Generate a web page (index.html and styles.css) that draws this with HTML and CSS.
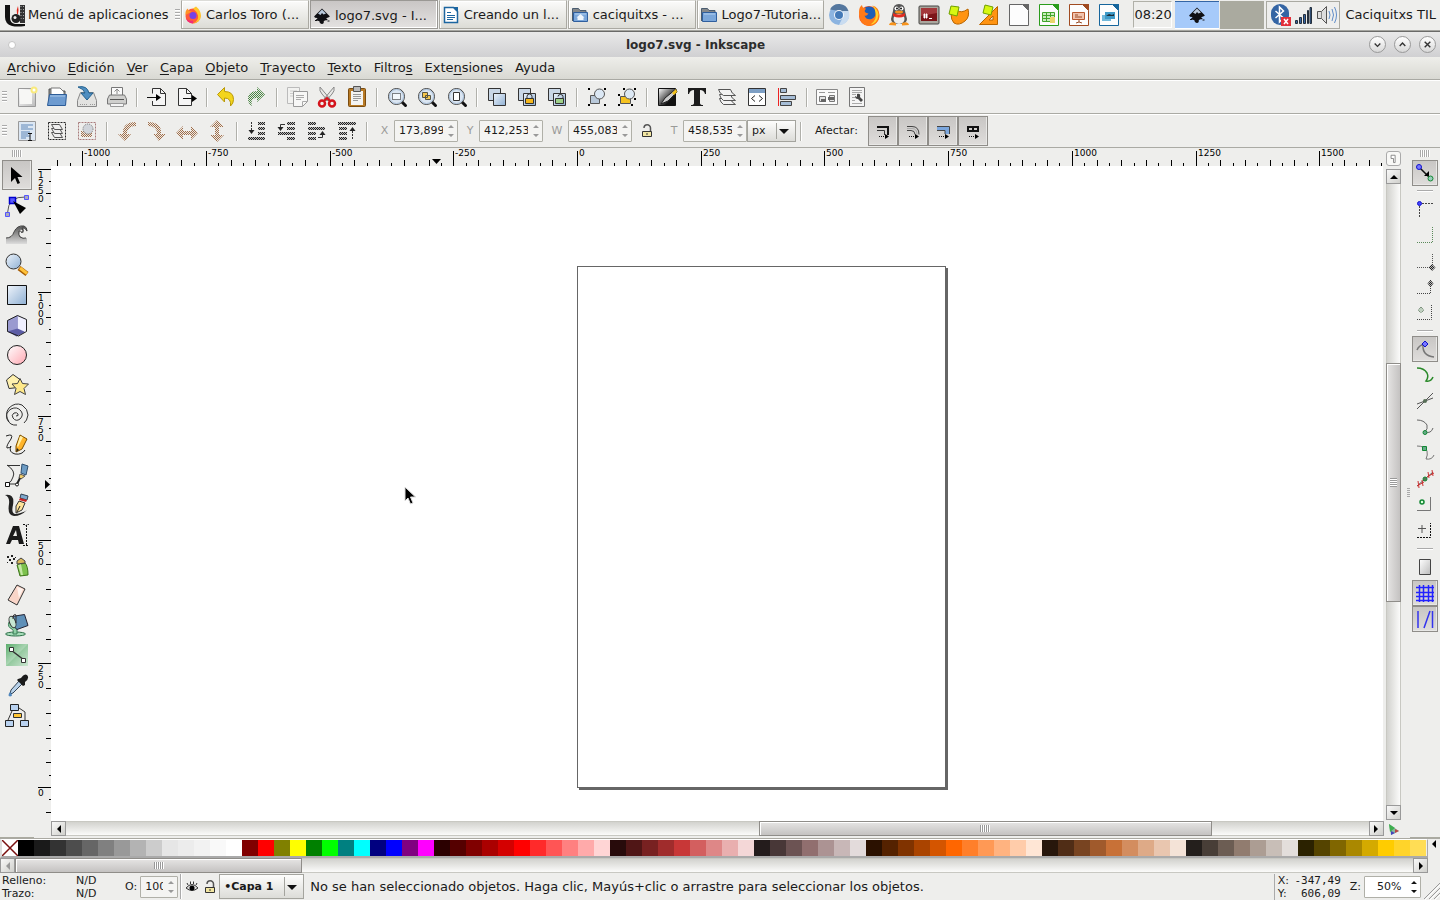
FILE: index.html
```html
<!DOCTYPE html>
<html lang="es">
<head>
<meta charset="utf-8">
<title>logo7.svg - Inkscape</title>
<link rel="stylesheet" href="styles.css">
</head>
<body>
<svg class="defs" aria-hidden="true">
  <defs>
    <linearGradient id="gBlue" x1="0" y1="0" x2="1" y2="1"><stop offset="0" stop-color="#eef4fb"/><stop offset="1" stop-color="#8fb0d3"/></linearGradient>
    <linearGradient id="gGrey" x1="0" y1="0" x2="1" y2="1"><stop offset="0" stop-color="#fff"/><stop offset="1" stop-color="#bbb"/></linearGradient>
    <linearGradient id="gPink" x1="0" y1="0" x2="1" y2="1"><stop offset="0" stop-color="#fff"/><stop offset="1" stop-color="#ffa8b2"/></linearGradient>
    <linearGradient id="gGreen" x1="0" y1="0" x2="1" y2="1"><stop offset="0" stop-color="#5aad6b"/><stop offset="1" stop-color="#fff"/></linearGradient>
    <linearGradient id="gInk" x1="0" y1="0" x2="1" y2="1"><stop offset="0" stop-color="#fff"/><stop offset=".7" stop-color="#111"/></linearGradient>
    <linearGradient id="gWave" x1="0" y1="0" x2="0" y2="1"><stop offset="0" stop-color="#555"/><stop offset="1" stop-color="#ddd"/></linearGradient>
    <pattern id="sBrown" width="2" height="2" patternUnits="userSpaceOnUse"><path fill="#eeeae6" d="M0 0h2v2H0z"/><path fill="#a0704c" d="M0 0h1v1H0zM1 1h1v1H1z"/></pattern>
    <pattern id="sDark" width="2" height="2" patternUnits="userSpaceOnUse"><path fill="#bbb" d="M0 0h2v2H0z"/><path fill="#222" d="M0 0h1v1H0zM1 1h1v1H1z"/></pattern>
    <pattern id="sGreen" width="2" height="2" patternUnits="userSpaceOnUse"><path fill="#e2eae0" d="M0 0h2v2H0z"/><path fill="#4c8245" d="M0 0h1v1H0zM1 1h1v1H1z"/></pattern>
  </defs>
  <symbol id="folder" viewBox="0 0 24 24"><path d="M4 20V4h7l1 2h8v14z" fill="#8d8f8c" stroke="#555" /><path d="M6 8V3h9l4 4v4H6z" fill="#fff" stroke="#777"/><path d="M2.500 20.500l2-11h17l-1 11z" fill="#6d9bd0" stroke="#2c5c98"/><path d="M5 11h15" stroke="#a9c7e8"/></symbol>
  <symbol id="dir" viewBox="0 0 18 18"><path d="M1.500 15V2.500h6l1.500 2h6V15" fill="#85888a" stroke="#4a5c70"/><path d="M2.500 15.500v-9h14v9z" fill="#7ba7da" stroke="#2f5f9e"/><path d="M4 8h11" stroke="#b4d0ee"/></symbol>
  <symbol id="lens" viewBox="0 0 24 24"><path d="M17 17l3.500 3.500" stroke="#111" stroke-width="3" stroke-linecap="round"/><circle cx="11.500" cy="11.500" r="8" fill="#dbe6f2" stroke="#444"/><circle cx="11.500" cy="11.500" r="7" fill="none" stroke="#a8bfd8"/></symbol>
  <symbol id="lock" viewBox="0 0 12 14"><path d="M3 4a3 3 0 0 1 6.500 0v4" fill="none" stroke="#555" stroke-width="1.500"/><path d="M1.500 7.500h9v5h-9z" fill="#f2e6a2" stroke="#333"/><path d="M6 9v2" stroke="#333"/></symbol>
  <symbol id="ink" viewBox="0 0 18 18"><path d="M9 1.500L1.500 9c-1 1 1 2 3 2.200 0 1-2 .8-1.500 1.800s3 .5 3.500 1.500-.5 1.500 2.500 2.500c3-1 1-2 2-3s4-.5 3.500-1.500-2-.8-1-1.300 4-1.200 3-2.200z" fill="#101014"/><path d="M9 2.500l4 4-2.500 1L9 6 7.500 8 5 6.500z" fill="#b9c9dc"/><path d="M2 13.500h2M14.500 14h2" stroke="#101014"/></symbol>
  <symbol id="doc" viewBox="0 0 24 24"><path d="M2.500 1.500h13l6 6v15h-19z" fill="#fdfdfd" stroke="currentColor"/><path d="M15 1h7v7z" fill="currentColor"/></symbol>
  <symbol id="squares" viewBox="0 0 24 24"><path d="M3.500 3.500h12v12h-12z" fill="#c9d7e6" stroke="#333"/><path d="M8.500 8.500h12v12h-12z" fill="url(#gBlue)" stroke="#333"/></symbol>
</svg>

<header class="panel">
  <button class="appmenu"><svg width="22" height="24" viewBox="0 0 22 24"><path d="M1 2h5v13q0 5 5 6h10v2q-8 1-13 0-7-2-7-9z" fill="#111"/><path d="M16 2h5v18h-5z" fill="#333"/><path d="M17 3v15M19.500 3v15" stroke="#aaa" stroke-dasharray="1 2"/><circle cx="12" cy="15.500" r="4.500" fill="#222"/><circle cx="11" cy="14.500" r="1.500" fill="#eee"/><path d="M13 11q-1-4 1-8 1 4 0 8z" fill="#e02418"/></svg>Menú de aplicaciones</button>
  <i class="grip"></i>
  <nav class="tasks">
    <button class="task"><svg width="18" height="18" viewBox="0 0 18 18"><circle cx="9" cy="10" r="7.500" fill="#ff5a3c"/><path d="M9 2.500L12 .5q5 4 5 9.500a8 8 0 0 1-8 7.500q6-3 5-8-1-4-5-7z" fill="#ffc629"/><path d="M1.500 9Q1 4 4 2.500q0 3 4 3z" fill="#ff9426"/><path d="M9 17.500a8 8 0 0 1-7-5q3 3 7 2z" fill="#f02a7c"/><circle cx="9" cy="9.500" r="3.500" fill="#7542e5"/></svg><span>Carlos Toro (...</span></button>
    <button class="task active"><svg width="18" height="18"><use href="#ink"/></svg><span>logo7.svg - I...</span></button>
    <button class="task"><svg width="18" height="18" viewBox="0 0 18 18"><path d="M2.500 1.500h9l4 4v11h-13z" fill="#fff" stroke="#1c66a0" stroke-width="1.500"/><path d="M11 1h5v5z" fill="#1c66a0"/><path d="M5 6.500h4M5 9.500h8M5 11.500h8M5 13.500h6" stroke="#1c66a0"/></svg><span>Creando un l...</span></button>
    <button class="task"><svg width="18" height="18" viewBox="0 0 18 18"><use href="#dir"/><path d="M9.500 8l4 3.500h-1V14h-6v-2.500h-1z" fill="#eef5fc"/></svg><span>caciquitxs - ...</span></button>
    <button class="task"><svg width="18" height="18"><use href="#dir"/></svg><span>Logo7-Tutoria...</span></button>
  </nav>
  <div class="launchers">
    <button aria-label="Chromium"><svg viewBox="0 0 24 24"><circle cx="12" cy="12" r="10" fill="#8cb4e0"/><path d="M3 6.500A10 10 0 0 1 21.500 8H12z" fill="#54779e"/><path d="M21.500 8a10 10 0 0 1-9.500 14L16 14V8z" fill="#c9dcf0"/><circle cx="12" cy="12" r="5" fill="#f2f6fa"/><circle cx="12" cy="12" r="4" fill="#447ab8"/></svg></button>
    <button aria-label="Firefox"><svg viewBox="0 0 24 24"><circle cx="12" cy="13" r="10" fill="#f4511e"/><circle cx="12" cy="11" r="7.500" fill="#1d5fb8"/><path d="M2 9q0-5 3-7 0 3 4 3.500-2 2-.5 4 2 1 3 1-2 3-4 2 2 5 7 3.500 5-2 4-8-.5-3-3-5.500Q22 4 22.500 12A10.500 10.500 0 0 1 12 23Q2 22 2 9z" fill="#ff7a18"/><path d="M15.500 2.500q5 3 6 9-1 9-8 10 7-5 5-12-.5-4-3-7z" fill="#ffd22e"/></svg></button>
    <button aria-label="Pingüino"><svg viewBox="0 0 24 24"><path d="M12 1q6 0 6 7l2 8q0 5-8 5t-8-5l2-8q0-7 6-7z" fill="#555"/><ellipse cx="12" cy="16" rx="5.500" ry="5" fill="#eee"/><path d="M6 10q6 3 12 0v3q-6 3-12 0z" fill="#e12b20"/><circle cx="9.500" cy="5.500" r="2" fill="#fff"/><circle cx="14.500" cy="5.500" r="2" fill="#fff"/><circle cx="10" cy="5.500" r="1" fill="#111"/><circle cx="14" cy="5.500" r="1" fill="#111"/><ellipse cx="12" cy="9" rx="4" ry="1.500" fill="#f6931d"/><path d="M2 22q1-4 7-2v2.500zM22 22q-1-4-7-2v2.500z" fill="#f6931d"/></svg></button>
    <button aria-label="Terminal de root"><svg viewBox="0 0 24 24"><rect x="2" y="3" width="20" height="18" rx="1" fill="#aaa69d" stroke="#444"/><path d="M4 5h16v13H4z" fill="#7c1519"/><path d="M4 5h16v5L4 13z" fill="#a3383b"/><path d="M6 12h5M6 14h5M7.500 10.500v5M9.500 10.500v5M12 15.500h3" stroke="#fff"/></svg></button>
    <button aria-label="Notas"><svg viewBox="0 0 24 24"><path d="M4 11l6-4q4 4 11-1 2 8-3 12-6 5-11 2-3-3-3-9z" fill="#ff9412" stroke="#b86500"/><path d="M4 3l8 1-2 9-8-2z" fill="#d7f711" stroke="#70a000"/></svg></button>
    <button aria-label="Dibujo"><svg viewBox="0 0 24 24"><path d="M20.500 3.500v18h-18z" fill="#ff9412" stroke="#b86500"/><path d="M16 13v4h-4z" fill="#eee" stroke="#b86500"/><path d="M8 2l8 2-2 8-8-2z" fill="#d7f711" stroke="#70a000"/></svg></button>
    <button aria-label="LibreOffice" class="c-grey"><svg><use href="#doc"/></svg></button>
    <button aria-label="Calc" class="c-green"><svg viewBox="0 0 24 24"><use href="#doc"/><path d="M5.500 9.500h12v9h-12z" fill="#c8ecbc" stroke="#43a52c"/><path d="M6 12.500h12M6 15.500h12M9.500 10v9M13.500 10v9" stroke="#43a52c"/><path d="M13 14h5v6h-5z" fill="#e9d66b"/></svg></button>
    <button aria-label="Impress" class="c-orange"><svg viewBox="0 0 24 24"><use href="#doc"/><path d="M5.500 9.500h12v7h-12z" fill="#f1c3ad" stroke="#b8582e"/><path d="M8 12h3M8 14h7M12 17v2l-3 1M12 19l3 1" stroke="#9a4a24" fill="none"/></svg></button>
    <button aria-label="Draw" class="c-blue"><svg viewBox="0 0 24 24"><use href="#doc"/><path d="M5 12h9v6H5z" fill="#71b8da"/><path d="M8 9h10v7H8z" fill="#3e9ac8"/><path d="M9 13l3-2 3 1 2-1v2z" fill="#1d2c36"/></svg></button>
  </div>
  <time class="clock">08:20</time>
  <div class="pager"><button class="current" aria-label="Escritorio 1"><svg width="18" height="18"><use href="#ink"/></svg></button><button aria-label="Escritorio 2"></button></div>
  <div class="tray">
    <svg width="22" height="24" viewBox="0 0 22 24"><rect x="1" y="1" width="18" height="21" rx="9" fill="#3465a4"/><path d="M5.500 8l8 7-4 4V4l4 4-8 7" fill="none" stroke="#fff" stroke-width="1.500"/><path d="M11 14h10v9H11z" fill="#e2303a"/><path d="M14 16l4 5M18 16l-4 5" stroke="#fff" stroke-width="1.500"/></svg>
    <svg width="20" height="20" viewBox="0 0 20 20"><path d="M1.500 15.500h2v3h-2zM5.500 12.500h2v6h-2zM9.500 9.500h2v9h-2zM13.500 5.500h1v13h-1zM16 2.500h1.500v16H16z" fill="#3465a4" stroke="#26303c"/></svg>
    <svg width="22" height="20" viewBox="0 0 22 20"><path d="M1.500 6.500h4l5-5v17l-5-5h-4z" fill="#ddd" stroke="#555"/><path d="M5.500 7v6" stroke="#888"/><path d="M13 6q2 4 0 8M16 4q3 6 0 12M18.500 2q4 8 0 16" fill="none" stroke="#5f8cc8"/></svg>
  </div>
  <span class="user">Caciquitxs TIL</span>
</header>

<div class="titlebar"><i class="dot"></i><h1>logo7.svg - Inkscape</h1>
  <div class="winbtns">
    <button aria-label="Minimizar"><svg viewBox="0 0 16 16"><path d="M5 7l3 3 3-3"/></svg></button><button aria-label="Maximizar"><svg viewBox="0 0 16 16"><path d="M5 9.500l3-3 3 3"/></svg></button><button aria-label="Cerrar"><svg viewBox="0 0 16 16"><path d="M5 5l6 6M11 5l-6 6"/></svg></button>
  </div>
</div>

<nav class="menubar"><button><u>A</u>rchivo</button><button><u>E</u>dición</button><button><u>V</u>er</button><button><u>C</u>apa</button><button><u>O</u>bjeto</button><button><u>T</u>rayecto</button><button><u>T</u>exto</button><button>Filtro<u>s</u></button><button>Exte<u>n</u>siones</button><button>Ayuda</button></nav>

<div class="toolbar" role="toolbar" aria-label="Comandos">
  <i class="grip"></i>
  <button aria-label="Nuevo"><svg viewBox="0 0 24 24"><path d="M3.500 3.500h17v18h-17z" fill="url(#gGrey)" stroke="#999"/><path d="M5 5h12v14H5z" fill="#f7f7f5"/><circle cx="19" cy="5" r="3.500" fill="#f9ea7c"/><circle cx="19" cy="5" r="1.500" fill="#fff"/></svg></button>
  <button aria-label="Abrir"><svg><use href="#folder"/></svg></button>
  <button aria-label="Guardar"><svg viewBox="0 0 24 24"><path d="M2.500 15.500l3-8h13l3 8v6h-19z" fill="#e2e2e0" stroke="#888"/><path d="M5 19.500h8M15 19.500h5" stroke="#999" stroke-dasharray="1 1"/><path d="M3 2q9-2 11 6h4l-6 7-6-7h4q-1-4-7-6z" fill="#4f8ec0" stroke="#23618f"/></svg></button>
  <button aria-label="Imprimir"><svg viewBox="0 0 24 24"><path d="M6.500 11V2.500h11V11" fill="#fafafa" stroke="#777"/><path d="M12 9V5M9.500 6.500L12 4l2.500 2.500" stroke="#888" fill="none"/><path d="M2.500 14l2-4h15l2 4v5h-19z" fill="#cfcfcd" stroke="#777"/><path d="M5 14.500h14" stroke="#555"/><path d="M5.500 18.500h13v3h-13z" fill="#f5f5f5" stroke="#999"/></svg></button>
  <i class="sep"></i>
  <button aria-label="Importar"><svg viewBox="0 0 24 24"><path d="M7.500 8.500v-5h8l5 5v12h-13V16" fill="#f5f5f5" stroke="#333"/><path d="M15.500 3.500v5h5" fill="none" stroke="#333"/><path d="M2 12.500h9" stroke="#111"/><path d="M11 9l5 3.500-5 3.500z"/></svg></button>
  <button aria-label="Exportar"><svg viewBox="0 0 24 24"><path d="M3.500 3.500h8l5 5v12h-13z" fill="#f5f5f5" stroke="#333"/><path d="M11.500 3.500v5h5" fill="none" stroke="#333"/><path d="M8 13.500h9" stroke="#111"/><path d="M17 10l5 3.500-5 3.500z"/></svg></button>
  <i class="sep"></i>
  <button aria-label="Deshacer"><svg viewBox="0 0 24 24"><path d="M2.500 9.500l7-7v4q9 0 9 8 0 4-3 6.500 1-8-6-8v4z" fill="#f3d51c" stroke="#b9990a"/></svg></button>
  <button aria-label="Rehacer"><svg viewBox="0 0 24 24"><path d="M20 9.500L12 2v4Q3 6 3 14q0 5 4 7-2-8 5-8v4z" fill="url(#sGreen)"/></svg></button>
  <i class="sep"></i>
  <button aria-label="Copiar"><svg viewBox="0 0 24 24"><path d="M2.500 2.500h12v16h-12z" fill="#f2f2f0" stroke="#bbb"/><path d="M5 6h7M5 8.500h7M5 11h7" stroke="#ccc"/><path d="M8.500 6.500h14v10l-5 5h-9z" fill="#f7f7f6" stroke="#999"/><path d="M11 10.500h8M11 12.500h8M11 14.500h5M17.500 21.500v-5h5" stroke="#aaa" fill="none"/></svg></button>
  <button aria-label="Cortar"><svg viewBox="0 0 24 24"><path d="M5 2q-1 4 2 7l6 7 2-2zM19 2q1 4-2 7l-6 7-2-2z" fill="#e8e8e6" stroke="#888"/><circle cx="7" cy="18.500" r="3" fill="none" stroke="#d4141c" stroke-width="2.500"/><circle cx="17" cy="18.500" r="3" fill="none" stroke="#d4141c" stroke-width="2.500"/><path d="M9 16l3-3 3 3" stroke="#d4141c" stroke-width="2" fill="none"/></svg></button>
  <button aria-label="Pegar"><svg viewBox="0 0 24 24"><rect x="3.500" y="3.500" width="17" height="18" rx="1" fill="#b87a25" stroke="#7a4c10"/><path d="M6 6h12v14H6z" fill="#f4f4f2"/><path d="M8.500 1.500h7v5h-7z" fill="#bbb" stroke="#555"/><path d="M8 9.500h8M8 11.500h8M8 13.500h8M8 15.500h5" stroke="#999"/></svg></button>
  <i class="sep"></i>
  <button aria-label="Ajustar selección"><svg viewBox="0 0 24 24"><use href="#lens"/><path d="M7.500 8.500h8v6h-8z" fill="#f4f8fc" stroke="#111" stroke-dasharray="1 1"/></svg></button>
  <button aria-label="Ajustar dibujo"><svg viewBox="0 0 24 24"><use href="#lens"/><path d="M7.500 7.500h5v5h-5zM10.500 10.500h5v4h-5z" fill="#f4c64e" stroke="#554"/></svg></button>
  <button aria-label="Ajustar página"><svg viewBox="0 0 24 24"><use href="#lens"/><path d="M8.500 7.500h6v8h-6z" fill="#fff" stroke="#333"/></svg></button>
  <i class="sep"></i>
  <button aria-label="Duplicar"><svg><use href="#squares"/></svg></button>
  <button aria-label="Clonar"><svg viewBox="0 0 24 24"><use href="#squares"/><path d="M12 13v-1.500a2 2 0 0 1 5 0V13" fill="none" stroke="#333"/><path d="M10.500 13.500h8v5h-8z" fill="#f5b81f" stroke="#333"/></svg></button>
  <button aria-label="Desconectar clon"><svg viewBox="0 0 24 24"><use href="#squares"/><path d="M13 11.500a2.500 2 0 0 1 5 0V14" fill="none" stroke="#333"/><path d="M10.500 13.500h8v5h-8z" fill="#9fd28a" stroke="#333"/></svg></button>
  <i class="sep"></i>
  <button aria-label="Agrupar"><svg viewBox="0 0 24 24"><path d="M5.500 10.500h9v8h-9z" fill="#b9c9da" stroke="#555"/><circle cx="14.500" cy="9" r="5" fill="#dce8f4" stroke="#555"/><path d="M3 3h2v2H3zM19 3h2v2h-2zM3 19h2v2H3zM19 19h2v2h-2z"/></svg></button>
  <button aria-label="Desagrupar"><svg viewBox="0 0 24 24"><path d="M5.500 11.500h10v7h-10z" fill="#f5c21f" stroke="#555"/><circle cx="14.500" cy="9" r="5" fill="#dce8f4" stroke="#555"/><path d="M3 9h2v2H3zM8 3h2v2H8zM19 3h2v2h-2zM3 19h2v2H3zM16 19h2v2h-2zM19 13h2v2h-2z"/></svg></button>
  <i class="sep"></i>
  <button aria-label="Relleno y borde"><svg viewBox="0 0 24 24"><path d="M3.500 3.500h17v17h-17z" fill="url(#gInk)" stroke="#111"/><path d="M21 4l-11 9-4 6 7-3 9-9z" fill="#ccc" stroke="#222"/><path d="M21 4l-4 4 2 2 3-3z" fill="#f3c21a"/></svg></button>
  <button aria-label="Texto y tipografía"><svg viewBox="0 0 24 24"><path d="M3 3h18v6h-1q-1-4-5-4v13q0 2 3 2v1H6v-1q3 0 3-2V5Q5 5 4 9H3z" fill="#1c1c1c"/></svg></button>
  <button aria-label="Capas"><svg viewBox="0 0 24 24" fill="#f2f2f2" stroke="#555"><path d="M4.500 13.500h11q1 4 5 6h-12q-3-2-4-6z"/><path d="M4.500 9.500h11q1 4 5 6h-12q-3-2-4-6z"/><path d="M3.500 4.500h12q1 4 5 6h-12q-4-2-5-6z"/></svg></button>
  <button aria-label="Editor XML"><svg viewBox="0 0 24 24"><path d="M3.500 3.500h17v17h-17z" fill="#fff" stroke="#333"/><path d="M4 4h16v4H4z" fill="#7d9fc4"/><path d="M10 10.500l-3.500 3L10 16.500M14 10.500l3.500 3-3.500 3" fill="none" stroke="#222"/></svg></button>
  <button aria-label="Alinear y distribuir"><svg viewBox="0 0 24 24"><path d="M3.500 3v18" stroke="#e22"/><path d="M5.500 3.500h6v4h-6zM5.500 10.500h15v4h-15zM5.500 16.500h11v4h-11z" fill="#a6bdd6" stroke="#444"/></svg></button>
  <i class="sep"></i>
  <button aria-label="Preferencias"><svg viewBox="0 0 24 24"><path d="M1.500 4.500h21v15h-21z" fill="#fbfbfb" stroke="#888"/><path d="M4 7.500h6M13 7.500h7" stroke="#999"/><path d="M4.500 11.500h6v5h-6zM14.500 10.500h5v6h-5z" fill="#e4e4e4" stroke="#777"/><path d="M6 14h5v3H6zM13 12h6v3h-6z" fill="#666"/></svg></button>
  <button aria-label="Propiedades del documento"><svg viewBox="0 0 24 24"><path d="M4.500 2.500h15v19h-15z" fill="#f5f5f5" stroke="#777"/><path d="M7 5.500h10M7 7.500h10M7 9.500h4M7 12.500h3M7 15.500h3M7 18.500h10" stroke="#aaa"/><path d="M12 9q4-1 3 3l3 3-2 2-3-3q-3 0-3-3l2 1z" fill="#444"/></svg></button>
</div>

<div class="toolbar second" role="toolbar" aria-label="Controles de herramienta">
  <i class="grip"></i>
  <button aria-label="Seleccionar todo"><svg viewBox="0 0 24 24"><path d="M3.500 2.500h17v19h-17z" fill="#dce7f3" stroke="#999"/><path d="M6 6h12M6 8h7M6 10h12M6 13h9M6 15h7M6 17h9M6 19h5" stroke="#5f87b8"/><path d="M13 14.500h4M15 15v6M13 21.500h4" stroke="#111"/></svg></button>
  <button aria-label="Seleccionar en todas las capas"><svg viewBox="0 0 24 24"><path d="M3.500 3.500h17v17h-17z" fill="none" stroke="#222" stroke-dasharray="2 1"/><g fill="#eee" stroke="#555"><path d="M6.500 13.500h8l3 5h-8z"/><path d="M6.500 9.500h8l3 5h-8z"/><path d="M6.500 5.500h8l3 5h-8z"/></g></svg></button>
  <button aria-label="Deseleccionar"><svg viewBox="0 0 24 24"><path d="M3.500 3.500h17v17h-17z" fill="none" stroke="#a87c7c" stroke-dasharray="2 1"/><path d="M6 12h11v6H6z" fill="url(#sBrown)"/><circle cx="13" cy="10" r="5" fill="#d0d4da" stroke="#777" stroke-dasharray="1 1"/></svg></button>
  <i class="sep"></i>
  <button aria-label="Rotar a la izquierda"><svg viewBox="0 0 24 24"><path d="M21 3v4q-9 0-9 8h4l-6 7-7-7h5Q7 3 21 3z" fill="url(#sBrown)"/></svg></button>
  <button aria-label="Rotar a la derecha"><svg viewBox="0 0 24 24"><path d="M3 3v4q9 0 9 8H8l6 7 7-7h-5Q17 3 3 3z" fill="url(#sBrown)"/></svg></button>
  <button aria-label="Reflejar horizontalmente"><svg viewBox="0 0 24 24"><path d="M1 14l7-7v5h8V7l7 7-7 7v-5H8v5z" fill="url(#sBrown)"/></svg></button>
  <button aria-label="Reflejar verticalmente"><svg viewBox="0 0 24 24"><path d="M12 1l7 7h-5v8h5l-7 7-7-7h5V8H5z" fill="url(#sBrown)"/></svg></button>
  <i class="sep"></i>
  <button aria-label="Bajar al fondo"><svg viewBox="0 0 24 24"><path d="M13 3h7v3h-7zM13 8h7v3h-7zM13 13h7v3h-7zM3 18h17v3H3z" fill="url(#sDark)"/><path d="M6.500 3v10" stroke="#333" stroke-dasharray="2 1"/><path d="M3.500 11h6l-3 4z" fill="#222"/></svg></button>
  <button aria-label="Bajar"><svg viewBox="0 0 24 24"><path d="M12 3h8v3h-8zM12 8h8v3h-8zM3 13h17v3H3zM12 18h8v3h-8z" fill="url(#sDark)"/><path d="M10 5.500H5.500V9" stroke="#333" fill="none"/><path d="M2.500 8h6l-3 4z" fill="#222"/></svg></button>
  <button aria-label="Subir"><svg viewBox="0 0 24 24"><path d="M3 3h8v3H3zM3 8h17v3H3zM3 13h8v3H3zM3 18h8v3H3z" fill="url(#sDark)"/><path d="M13 18.500h4.500V15" stroke="#333" fill="none"/><path d="M14.500 16h6l-3-4z" fill="#222"/></svg></button>
  <button aria-label="Subir al frente"><svg viewBox="0 0 24 24"><path d="M3 3h18v3H3zM4 8h8v3H4zM4 13h8v3H4zM4 18h8v3H4z" fill="url(#sDark)"/><path d="M17.500 12v9" stroke="#333" stroke-dasharray="2 1"/><path d="M14.500 12h6l-3-4z" fill="#222"/></svg></button>
  <i class="sep"></i>
  <label class="dim" for="x">X</label><span class="spin"><input id="x" value="173,899"><svg viewBox="0 0 8 16"><path d="M1 5l3-3 3 3zM1 11l3 3 3-3z"/></svg></span>
  <label class="dim" for="y">Y</label><span class="spin"><input id="y" value="412,253"><svg viewBox="0 0 8 16"><path d="M1 5l3-3 3 3zM1 11l3 3 3-3z"/></svg></span>
  <label class="dim wide" for="w">W</label><span class="spin"><input id="w" value="455,083"><svg viewBox="0 0 8 16"><path d="M1 5l3-3 3 3zM1 11l3 3 3-3z"/></svg></span>
  <button class="lockbtn" aria-label="Bloquear proporción"><svg><use href="#lock"/></svg></button>
  <label class="dim" for="t">T</label><span class="spin"><input id="t" value="458,535"><svg viewBox="0 0 8 16"><path d="M1 5l3-3 3 3zM1 11l3 3 3-3z"/></svg></span>
  <span class="combo unit"><select aria-label="Unidad"><option>px</option><option>mm</option></select></span>
  <i class="sep"></i>
  <span class="affect">Afectar:</span>
  <button class="on" aria-label="Escalar grosor"><svg viewBox="0 0 24 24"><path d="M6 8h11v8" fill="none" stroke="#111" stroke-width="2"/><path d="M6 11.500h7.500V16" fill="none" stroke="#333"/><path d="M8 17.500h7" stroke="#111" stroke-dasharray="1 1"/><path d="M14 15l4 2.500-4 2.500z"/></svg></button>
  <button class="on" aria-label="Escalar esquinas"><svg viewBox="0 0 24 24"><path d="M6 7.500h5q7 0 7 8M6 11.500h4q4 0 4 4" fill="none" stroke="#444"/><path d="M6 9.500h5q5 0 5 6" fill="none" stroke="#aaa"/><path d="M8 17.500h7" stroke="#111" stroke-dasharray="1 1"/><path d="M14 15l4 2.500-4 2.500z"/></svg></button>
  <button class="on" aria-label="Mover degradados"><svg viewBox="0 0 24 24"><path d="M6 9h10v6" fill="none" stroke="#7ba6dc" stroke-width="4"/><path d="M6 7.500h12.500V15M6 11.500h8V15" fill="none" stroke="#444"/><path d="M8 17.500h7" stroke="#111" stroke-dasharray="1 1"/><path d="M14 15l4 2.500-4 2.500z"/></svg></button>
  <button class="on" aria-label="Mover patrones"><svg viewBox="0 0 24 24"><path d="M6 8h12M6 12h12" stroke="#111" stroke-width="2"/><path d="M7 7v6M12 7v6M17 7v6" stroke="#111" stroke-width="2"/><path d="M8 17.500h7" stroke="#111" stroke-dasharray="1 1"/><path d="M14 15l4 2.500-4 2.500z"/></svg></button>
</div>

<main class="main">
  <aside class="toolbox" aria-label="Herramientas">
    <i class="vgrip"></i>
    <button class="on" aria-label="Selector"><svg viewBox="0 0 24 24"><path d="M6 4v15l4-4 2.500 6 2.500-1-2.500-6h5z"/></svg></button>
    <button aria-label="Nodos"><svg viewBox="0 0 24 24"><path d="M2.500 20Q3 3 21 4" fill="none" stroke="#555"/><path d="M4.500 4.500h6v6h-6z" fill="#5a5aff" stroke="#00c" stroke-width="1.500"/><path d="M19.500 2.500h4v4h-4zM.5 19.500h4v4h-4z" fill="#aab" stroke="#55f"/><path d="M8 8l7 13 6-6z"/></svg></button>
    <button aria-label="Retoque"><svg viewBox="0 0 24 24"><path d="M1 21v-6q6 0 8-6 3-7 10-6 4 2 3 6-1-4-4-4 2 3 0 5 0-4-3-3-2 4 1 7 3 2 6 1v6z" fill="url(#gWave)"/><path d="M1 15q6 0 8-6 3-7 10-6 3 1 3 5-2-4-5-3 2 3 0 5-1-3-3-2-1 4 1 6 3 2 6 1" fill="none" stroke="#444"/></svg></button>
    <button aria-label="Zoom"><svg viewBox="0 0 24 24"><path d="M14 15l8 6" stroke="#a65b00" stroke-width="5"/><path d="M15 15l7 5.500" stroke="#ffc239" stroke-width="3"/><circle cx="8.500" cy="8.500" r="7.500" fill="url(#gBlue)" stroke="#333"/></svg></button>
    <button aria-label="Rectángulo"><svg viewBox="0 0 24 24"><path d="M2.500 2.500h19v19h-19z" fill="url(#gBlue)" stroke="#111"/></svg></button>
    <button aria-label="Caja 3D"><svg viewBox="0 0 24 24"><path d="M2.500 7.500l10-5 9 4-2 13-8 4-9-5z" fill="#5d5da6"/><path d="M12.500 2.500l9 4v13l-9-4z" fill="#f0f0ff"/><path d="M2.500 7.500l10-5v13l-10 3z" fill="#9a9ad0"/><path d="M2.500 7.500l10-5 9 4v12l-8 4.500-11-4.500z" fill="none" stroke="#222"/></svg></button>
    <button aria-label="Elipse"><svg viewBox="0 0 24 24"><circle cx="12" cy="12" r="9.500" fill="url(#gPink)" stroke="#222"/></svg></button>
    <button aria-label="Estrella"><svg viewBox="0 0 24 24"><path d="M8 1.500l7 5-2 8-9 1L1.500 7z" fill="#fff1ae" stroke="#333"/><path d="M15 5.500l2.500 5 6 .5-4.500 4.500 1.500 6-5.500-3-5.500 3 1.500-6-4-4.500 5.500-.5z" fill="#ffe98a" stroke="#444"/></svg></button>
    <button aria-label="Espiral"><svg viewBox="0 0 24 24"><path d="M11 13q3 0 2-2-1-2-4-1-3 2-1 5 3 4 7 1 4-4 1-8-4-5-10-2-6 4-4 10 3 7 10 6M4 19Q-1 11 4 5q6-6 13-3 6 4 6 10-1 6-4 8" fill="none" stroke="#333"/></svg></button>
    <button aria-label="Lápiz"><svg viewBox="0 0 24 24"><path d="M1 3q8-3 5 3-5 7-4 9 3 0 4-2-3 6 4 8 7 1 10-4" fill="none" stroke="#222"/><path d="M15 2l7 4-5 10-6 3 0-6z" fill="#ffb52b" stroke="#7a4e00"/><path d="M15 3l3 1-5 10-1-1z" fill="#fff0a8"/><path d="M11 19l1-4 2 2z" fill="#222"/></svg></button>
    <button aria-label="Bézier"><svg viewBox="0 0 24 24"><path d="M2 2.500h13M2 2q9 6 6 12-1 5-6 7h9" fill="none" stroke="#333"/><path d="M17 1l6 2-2 9-5-2z" fill="#6d9cc4" stroke="#2d4e6e"/><path d="M15 11l5 2-4 3-2-1z" fill="#f2cf6a" stroke="#555"/><path d="M15 15l-3 6" stroke="#222" stroke-width="2"/><path d="M.5 19.500h4v4h-4z" fill="#fff" stroke="#111"/><circle cx="12" cy="21.500" r="1.500" fill="#fff" stroke="#111"/></svg></button>
    <button aria-label="Caligrafía"><svg viewBox="0 0 24 24"><path d="M0 2q10-2 8 10-2 8 2 9 8-1 12-4-6 6-13 6-7-1-5-12 1-7-4-9z" fill="#222"/><path d="M16 1l7 2-1 4-7-2z" fill="#7fa8cc" stroke="#345"/><path d="M15 5l7 2-1 2-7-2z" fill="#c22"/><path d="M14 8l6 2-3 7-6 3v-7z" fill="#ffe39a" stroke="#333"/><path d="M12 19l3-6" stroke="#222"/></svg></button>
    <button aria-label="Texto"><svg viewBox="0 0 24 24"><path d="M8 3h6l5 18h-5l-1-4H7l-2 4H1zM8 13h4l-1-6z" fill="#1a1a1a" fill-rule="evenodd"/><path d="M18 1.500h2l1 1 1-1h2M21.500 2v20M18 22.500h6" stroke="#111" fill="none" stroke-dasharray="2 1"/></svg></button>
    <button aria-label="Aerosol"><svg viewBox="0 0 24 24"><path d="M12 12l8-2q3 3 3 12l-8 1z" fill="#7cc14d" stroke="#3c7418"/><path d="M13 12l3-1 2 11h-2z" fill="#c4e8a4"/><path d="M12 8l4-3 4 3v2l-8 1z" fill="#d9b95b" stroke="#444"/><path d="M2 3h2v2H2zM6 2h2v2H6zM4 6h2v2H4zM8 5h2v2H8zM2 9h1v1H2zM6 9h2v2H6zM10 4h1v1h-1z" fill="#222"/></svg></button>
    <button aria-label="Goma"><svg viewBox="0 0 24 24"><path d="M12 2l8 4-8 16-9-5z" fill="#f9d5c8" stroke="#333"/><path d="M12 4l6 2-4 9z" fill="#fff3ee"/></svg></button>
    <button aria-label="Cubo de pintura"><svg viewBox="0 0 24 24"><ellipse cx="10.500" cy="21" rx="10" ry="2" fill="#a5dcb8" stroke="#2c6e47"/><path d="M4 9q-2 5 3 7 2 1 1 5h4q1-6-2-8z" fill="#8fd0a5" stroke="#3a7d56"/><path d="M7 3.500L19.500 1.500l3.500 11-11 4Q6 12 7 3.500z" fill="#5f90b8" stroke="#223"/><ellipse cx="7.500" cy="9" rx="3" ry="6" transform="rotate(-20 7.500 9)" fill="#c6e6d2" stroke="#333"/><path d="M8 6q0-6 3-4v8" fill="none" stroke="#333"/></svg></button>
    <button aria-label="Degradado"><svg viewBox="0 0 24 24"><path d="M1 1h22v22H1z" fill="url(#gGreen)"/><path d="M1 23L23 1v22z" fill="#5aad6b" opacity=".3"/><path d="M6 7l13 10" stroke="#333" stroke-width="1.500"/><path d="M4.500 4.500h4v4h-4zM16.500 15.500h4v4h-4z" fill="#fff" stroke="#333"/></svg></button>
    <button aria-label="Cuentagotas"><svg viewBox="0 0 24 24"><path d="M14 8l3 3-9 9-3 1 1-4z" fill="#b9d2ea" stroke="#345"/><path d="M13 6l3-1q3-5 6-3 3 3-2 7l0 3-2 1-6-6z" fill="#1b1b1b"/><path d="M5 19q4 4 0 4.500-3-.5 0-4.500z" fill="#4f86bd"/></svg></button>
    <button aria-label="Conector"><svg viewBox="0 0 24 24"><path d="M7 8L3 17M14 5l6 4v8" fill="none" stroke="#333"/><path d="M5.500 1.500h8v6h-8zM.5 17.500h8v6h-8zM15.500 17.500h8v6h-8z" fill="#b9d2f0" stroke="#222"/><path d="M8.500 10.500h8v4h-8z" fill="#ffc532" stroke="#333"/></svg></button>
  </aside>

  <section class="workspace">
    <svg class="hruler" id="hruler"></svg>
    <button class="cms-top" aria-label="Zoom fijo"><svg viewBox="0 0 16 16"><path d="M5 4h5v9H8V8H5z" fill="#fff" stroke="#777"/></svg></button>
    <svg class="vruler" id="vruler"></svg>
    <div class="canvas">
      <div class="page"></div>
      <svg class="cursor" width="14" height="20" viewBox="0 0 14 20"><path d="M1 1v14l3-3 2.500 6 2.500-1-2.500-6h5z" stroke="#ddd"/></svg>
    </div>
    <div class="scroll v"><button aria-label="Arriba"><svg viewBox="0 0 8 8"><path d="M0 6l4-4 4 4z"/></svg></button><i class="gap a"></i><i class="thumb"></i><i class="gap b"></i><button aria-label="Abajo"><svg viewBox="0 0 8 8"><path d="M0 2l4 4 4-4z"/></svg></button></div>
    <div class="scroll h"><button aria-label="Izquierda"><svg viewBox="0 0 8 8"><path d="M6 0L2 4l4 4z"/></svg></button><i class="gap a"></i><i class="thumb"></i><i class="gap b"></i><button aria-label="Derecha"><svg viewBox="0 0 8 8"><path d="M2 0l4 4-4 4z"/></svg></button></div>
    <button class="cms" aria-label="Gestión de color"><svg viewBox="0 0 14 14"><path d="M2 2l10 7-8 4z" fill="#8ab8a0"/><path d="M2 2l6 4-5 4z" fill="#3fae4f"/><path d="M12 9l-4 2V7z" fill="#b44"/><path d="M4 13V9l4 2z" fill="#44b"/></svg></button>
  </section>

  <div class="splitter"><i></i></div>

  <aside class="snapbar" aria-label="Ajuste">
    <i class="vgrip"></i>
    <button class="on" aria-label="Activar ajuste"><svg viewBox="0 0 22 22"><path d="M6 6l9 9" stroke="#111" stroke-width="1.500"/><path d="M10 14h5V9z"/><circle cx="5" cy="5" r="2.500" fill="#77f" stroke="#11c"/><circle cx="16.500" cy="16.500" r="2.500" fill="#9cb" stroke="#183"/></svg></button>
    <i class="hsep"></i>
    <button aria-label="Caja"><svg viewBox="0 0 22 22"><path d="M5 5.500h14M5.500 5v14" stroke="#444" stroke-dasharray="2 1"/><circle cx="5.500" cy="5.500" r="2" fill="#44f" stroke="#11c"/></svg></button>
    <button aria-label="Bordes"><svg viewBox="0 0 22 22"><path d="M3 18.500h15.500V3" fill="none" stroke="#5a8a5a" stroke-dasharray="1 1"/></svg></button>
    <button aria-label="Esquinas"><svg viewBox="0 0 22 22"><path d="M3 17.500h15.500V3" fill="none" stroke="#555" stroke-dasharray="1 1"/><path d="M18 14l3.500 3.500L18 21l-3.500-3.500z" fill="url(#sDark)"/></svg></button>
    <button aria-label="Puntos medios"><svg viewBox="0 0 22 22"><path d="M3 17.500h13.500V3" fill="none" stroke="#444" stroke-dasharray="1 1"/><path d="M16.500 4l3 3.500-3 3.500-3-3.500z" fill="url(#sDark)"/></svg></button>
    <button aria-label="Centros"><svg viewBox="0 0 22 22"><path d="M3 17.500h14.500V3" fill="none" stroke="#444" stroke-dasharray="1 1"/><path d="M7 5l3 3-3 3-3-3z" fill="#bfd0bf" stroke="#587058" stroke-dasharray="1 1"/></svg></button>
    <i class="hsep"></i>
    <button class="on" aria-label="Nodos"><svg viewBox="0 0 22 22"><path d="M3 12q2-5 8-6M9 6q-1 12 11 13" fill="none" stroke="#777" stroke-width="1.500"/><path d="M11 3l3 3-3 3-3-3z" fill="#77f" stroke="#11c"/></svg></button>
    <button aria-label="Trayectos"><svg viewBox="0 0 22 22"><path d="M3 4q7 0 10 5 2 4-1 8 5 1 7-4" fill="none" stroke="#2a8a2a" stroke-width="1.500"/></svg></button>
    <button aria-label="Intersecciones"><svg viewBox="0 0 22 22"><path d="M3 19L19 3M3 14q8-3 16-6" fill="none" stroke="#555"/><circle cx="11" cy="11" r="2" fill="#587058"/></svg></button>
    <button aria-label="Nodos vértice"><svg viewBox="0 0 22 22"><path d="M3 4q7 0 10 5 1 4-2 7 6 2 8-4" fill="none" stroke="#666"/><circle cx="11" cy="16.500" r="2" fill="#6a8" stroke="#183"/></svg></button>
    <button aria-label="Nodos suaves"><svg viewBox="0 0 22 22"><path d="M3 4q8 0 10 5 1 4-1 8 6 1 8-4" fill="none" stroke="#777"/><path d="M8.500 4.500h4v4h-4z" fill="#6a8" stroke="#183"/></svg></button>
    <button aria-label="Medios de línea"><svg viewBox="0 0 22 22"><path d="M3 18L19 4" stroke="#555"/><path d="M4 13l1 7M8 12l1 6M14 4l1 6M18 2l1 6M3 18l7-4M13 9l7-4" stroke="#c33"/><circle cx="11" cy="11" r="2" fill="#587058" stroke="#183"/></svg></button>
    <button aria-label="Centros de objetos"><svg viewBox="0 0 22 22"><path d="M3 16.500h13.500V3" fill="none" stroke="#777"/><circle cx="8" cy="8" r="2" fill="#dfd" stroke="#183" stroke-width="1.500"/></svg></button>
    <button aria-label="Centro de rotación"><svg viewBox="0 0 22 22"><path d="M3 17.500h13.500V3" fill="none" stroke="#111" stroke-dasharray="2 1"/><path d="M4 8.500h8M8 5v8" stroke="#555"/></svg></button>
    <i class="hsep"></i>
    <button aria-label="Borde de página"><svg viewBox="0 0 22 22"><path d="M5.500 3.500h11v15h-11z" fill="url(#gGrey)" stroke="#444"/></svg></button>
    <button class="on" aria-label="Rejilla"><svg viewBox="0 0 22 22"><path d="M2 5.500h18M2 10.500h18M2 14.500h18M2 18.500h18M5.500 3v17M9.500 3v17M14.500 3v17M18.500 3v17" stroke="#22f" stroke-width="1.500"/></svg></button>
    <button class="on" aria-label="Guías"><svg viewBox="0 0 22 22"><path d="M4 3v17M18.500 3v17M10 20l6-17" stroke="#33e" stroke-width="1.500"/></svg></button>
  </aside>
</main>

<div class="palette"><div class="swatches" id="swatches"><button class="none" aria-label="Ninguno"><svg viewBox="0 0 16 16"><path d="M0 0l16 16M16 0L0 16" stroke="#7a1010" stroke-width="1.500"/></svg></button></div><button class="palmenu" aria-label="Menú de paleta"><svg viewBox="0 0 8 8"><path d="M6 0L2 4l4 4z"/></svg></button></div>
<div class="scroll h palscroll"><button class="off" aria-label="Izquierda"><svg viewBox="0 0 8 8"><path d="M6 0L2 4l4 4z"/></svg></button><i class="thumb"></i><i class="gap b"></i><button aria-label="Derecha"><svg viewBox="0 0 8 8"><path d="M2 0l4 4-4 4z"/></svg></button></div>

<footer class="status">
  <dl class="style"><dt>Relleno:</dt><dd>N/D</dd><dt>Trazo:</dt><dd>N/D</dd></dl>
  <label for="op">O:</label><span class="spin small"><input id="op" value="100"><svg viewBox="0 0 8 16"><path d="M1 5l3-3 3 3zM1 11l3 3 3-3z"/></svg></span>
  <i class="vline"></i>
  <button aria-label="Visibilidad"><svg viewBox="0 0 14 14"><path d="M1 8q6-7 12 0-6 5-12 0z" fill="#ddd" stroke="#333"/><circle cx="7" cy="8" r="2.500"/><path d="M3 5L2 3M5.500 4V1.500M8.500 4V1.500M11 5l1-2" stroke="#333"/></svg></button>
  <button class="slock" aria-label="Bloqueo"><svg><use href="#lock"/></svg></button>
  <span class="combo layer"><select aria-label="Capa"><option>•Capa 1</option></select></span>
  <p class="msg">No se han seleccionado objetos. Haga clic, Mayús+clic o arrastre para seleccionar los objetos.</p>
  <div class="coords"><span>X:</span><b>-347,49</b><span>Y:</span><b>606,09</b></div>
  <label for="z">Z:</label><span class="spin zoom"><input id="z" value="50%"><svg viewBox="0 0 8 16"><path d="M1 5l3-3 3 3zM1 11l3 3 3-3z"/></svg></span>
  <svg class="resize" viewBox="0 0 16 18"><path d="M0 17L16 1M5 17L16 6M10 17l6-6" stroke="#999"/><path d="M1 18L16 3M6 18L16 8M11 18l5-5" stroke="#fff"/></svg>
</footer>
<script src="app.js"></script>
</body>
</html>
```
FILE: styles.css
```css
* { box-sizing: border-box; }
body { margin: 0; height: 100vh; display: flex; flex-direction: column; overflow: hidden; background: #eeeeec; color: #1a1a1a; font: 13px/16px "DejaVu Sans", sans-serif; }
button { margin: 0; padding: 0; border: 0; background: none; font: inherit; color: inherit; display: flex; align-items: center; justify-content: center; }
svg { display: block; flex: none; }
i { display: block; flex: none; }
.defs { position: absolute; width: 0; height: 0; }

.panel { display: flex; height: 32px; border-bottom: 1px solid #6a6a68; box-shadow: inset 0 -1px #a5a5a0; flex: none; white-space: nowrap; padding-bottom: 2px; }
.appmenu { padding-left: 4px; gap: 2px; width: 174px; justify-content: flex-start; }
.grip { width: 5px; height: 12px; margin: auto 1px; background: repeating-linear-gradient(#aaa 0 1px, #fff 1px 2px, #eeeeec 2px 3px); }
.tasks { display: flex; flex: 1; min-width: 0; }
.task { flex: 1; min-width: 0; gap: 4px; padding-left: 2px; justify-content: flex-start; border: 1px solid #aaa9a2; border-top-color: #dcdcd8; box-shadow: inset 1px 1px #fff; background: linear-gradient(#fbfbfa, #dcdcd6); }
.task span { overflow: hidden; }
.task + .task { margin-left: 1px; }
.task.active { background: linear-gradient(#c9c6c5, #e4e2e1); border-color: #9a9894; padding-top: 2px; box-shadow: inset -1px -1px #fff; }
.launchers { display: flex; }
.launchers button { width: 30px; }
.launchers svg { width: 24px; height: 24px; }
.c-grey { color: #666; } .c-green { color: #2b9c1c; } .c-orange { color: #a04a20; } .c-blue { color: #16659c; }
.clock { width: 39px; height: 27px; margin: 1px 0 0 9px; border: 1px solid #b0b0a8; border-right-color: #fff; border-bottom-color: #fff; line-height: 25px; text-align: center; }
.pager { display: flex; margin: 1px 2px 0 3px; gap: 1px; height: 28px; }
.pager button { width: 44px; background: #aaaa9f; }
.pager .current { background: #a6cafa; border-top: 1px solid #3465a4; border-bottom: 1px solid #fff; }
.tray { display: flex; align-items: center; gap: 2px; width: 74px; height: 28px; margin-top: 1px; border: 1px solid #aaaaa2; padding-left: 3px; }
.user { line-height: 29px; padding: 0 4px 0 5px; }

.titlebar { display: flex; align-items: center; height: 25px; flex: none; background: linear-gradient(#e9e9e9, #d0d0d2); }
.titlebar h1 { flex: 1; margin: 0; text-align: center; font-size: 12px; color: #2c2c2c; padding-left: 6px; }
.dot { width: 8px; height: 8px; margin-left: 8px; border: 1px solid #c4c4c4; border-radius: 50%; background: #fff; }
.winbtns { display: flex; gap: 8px; padding-right: 4px; }
.winbtns button { width: 17px; height: 17px; border: 1px solid #999; border-radius: 50%; background: linear-gradient(#fff, #d8d8d8); }
.winbtns svg { width: 15px; height: 15px; fill: none; stroke: #333; stroke-width: 1.5; }
.menubar { display: flex; height: 23px; flex: none; padding-left: 1px; border-bottom: 1px solid #a9a9a3; background: linear-gradient(#eeeeea, #d9d9d3); }
.menubar button { display: block; padding: 0 6px; }
.menubar u { text-underline-offset: 2px; }

.toolbar { display: flex; align-items: center; height: 34px; flex: none; border-bottom: 1px solid #aaaaa4; border-top: 1px solid #fff; padding-left: 1px; font-size: 11px; }
.toolbar .grip { margin: 0 5px 0 1px; }
.toolbar button { width: 30px; height: 30px; }
.toolbar svg { width: 24px; height: 24px; }
.sep { width: 10px; height: 19px; background: linear-gradient(90deg, transparent 4px, #b0b0aa 4px 5px, #fff 5px 6px, transparent 6px); }
.toolbar .on, .toolbox .on, .snapbar .on { border: 1px solid #8f8d89; background: linear-gradient(#c8c6c4, #dfdddb); box-shadow: inset -1px -1px #e8e8e6; }
.dim { color: #9a9a98; width: 20px; text-align: center; padding-left: 4px; }
.sep + .dim { width: 21px; }
.dim + .spin { margin-left: 1px; }
.wide { width: 24px; }
.spin { display: flex; align-items: center; width: 64px; height: 22px; flex: none; border: 1px solid #b0b0a8; border-radius: 1px; background: #f4f4f2; padding: 0 2px 0 4px; }
.spin input { flex: 1; width: 0; min-width: 0; padding: 0; border: 0; background: none; font: 11px/16px "DejaVu Sans", sans-serif; color: #1a1a1a; outline: 0; }
.toolbar .spin svg, .spin svg { width: 8px; height: 16px; margin-left: 4px; fill: #999; }
.toolbar .lockbtn { width: 30px; }
.toolbar .lockbtn svg { width: 12px; height: 14px; }
.combo { position: relative; display: flex; height: 22px; border: 1px solid #a4a49e; background: linear-gradient(#fdfdfc, #dcdcd8); }
.combo select { appearance: none; width: 100%; border: 0; background: none; padding: 0 0 0 4px; font: 11px/16px "DejaVu Sans", sans-serif; color: #1a1a1a; }
.combo::before { content: ""; position: absolute; right: 18px; top: 2px; bottom: 2px; width: 1px; background: #a4a49e; }
.combo::after { content: ""; position: absolute; right: 6px; top: 8px; border: 5px solid transparent; border-top-color: #111; border-bottom: 0; }
.unit { width: 49px; }
.affect { padding: 0 10px 0 9px; }

.main { display: flex; flex: 1; min-height: 0; }
.toolbox { display: flex; flex-direction: column; width: 34px; align-items: center; border-bottom: 1px solid #aaaaa0; overflow: hidden; }
.vgrip { width: 10px; height: 7px; margin: 2px 0 3px; background: repeating-linear-gradient(90deg, #aaa 0 1px, #fff 1px 2px); }
.toolbox button { width: 30px; height: 30px; flex: none; }
.toolbox svg { width: 24px; height: 24px; }
.workspace { flex: 1; min-width: 0; display: grid; grid-template: 18px 1fr 17px / 17px 1fr 18px; }
.hruler { grid-area: 1 / 2; width: 100%; height: 18px; font-size: 9px; }
.vruler { grid-area: 2 / 1; width: 17px; height: 100%; font-size: 9px; }
.cms-top { grid-area: 1 / 3; margin: 3px 0 0 3px; width: 15px; height: 15px; border: 1px solid #aaa; border-radius: 3px; background: #f8f8f6; }
.cms-top svg { width: 13px; height: 13px; }
.canvas { grid-area: 2 / 2; background: #fff; position: relative; overflow: hidden; }
.page { position: absolute; left: 526px; top: 100px; width: 369px; height: 522px; border: 1px solid #666; box-shadow: 2px 2px #666; background: #fff; }
.cursor { position: absolute; left: 353px; top: 320px; }
.scroll { display: flex; border: 1px solid #c8c8c2; }
.scroll button { width: 15px; height: 15px; flex: none; border: 1px solid #999; background: linear-gradient(135deg, #f8f8f8, #d0d0cc); margin: -1px; }
.scroll button svg { width: 8px; height: 8px; }
.scroll .off svg { fill: #999; }
.thumb { border: 1px solid #8f8d89; box-shadow: inset 1px 1px #fff; margin: -1px; position: relative; flex-basis: 0; }
.thumb::after { content: ""; position: absolute; inset: 0; margin: auto; }
.gap { flex-basis: 0; }
.scroll.v { grid-area: 2 / 3; flex-direction: column; margin: 3px 0 1px 3px; width: 15px; background: linear-gradient(90deg, #d2d2ce, #fbfbfa); }
.v .thumb { background: linear-gradient(90deg, #e6e5e4, #c4c2c1); flex-grow: 237; }
.v .thumb::after { width: 7px; height: 9px; background: repeating-linear-gradient(#999 0 1px, #fff 1px 2px); }
.v .a { flex-grow: 180; } .v .b { flex-grow: 204; }
.scroll.h { height: 15px; background: linear-gradient(#d2d2ce, #fbfbfa); }
.workspace .h { grid-area: 3 / 2; margin: 0 -1px 0 0; }
.h .thumb { background: linear-gradient(#e6e5e4, #c4c2c1); flex-grow: 450; }
.h .thumb::after { width: 10px; height: 7px; background: repeating-linear-gradient(90deg, #999 0 1px, #fff 1px 2px); }
.h .a { flex-grow: 693; } .h .b { flex-grow: 159; }
.cms { grid-area: 3 / 3; padding: 0 0 2px 3px; }
.cms svg { width: 14px; height: 14px; }
.splitter { width: 9px; flex: none; display: flex; align-items: center; justify-content: flex-end; }
.splitter i { width: 3px; height: 10px; background: repeating-linear-gradient(#aaa 0 1px, transparent 1px 2px); }
.snapbar { display: flex; flex-direction: column; align-items: center; width: 30px; border-bottom: 1px solid #aaaaa0; overflow: hidden; }
.snapbar button { width: 26px; height: 26px; flex: none; }
.snapbar svg { width: 22px; height: 22px; }
.hsep { width: 16px; height: 10px; background: linear-gradient(transparent 4px, #aaa 4px 5px, #fff 5px 6px, transparent 6px); }

.palette { display: flex; height: 20px; flex: none; border-top: 1px solid #aaa9a2; }
.swatches { display: flex; flex: 1; min-width: 0; overflow: hidden; border: 1px solid #fff; border-left: 2px solid #ddd; border-right: 1px solid #aaa; border-bottom: 2px solid #aaa; height: 19px; }
.swatches button { width: 16px; height: 16px; flex: none; }
.none { background: #fff; }
.none svg { width: 16px; height: 16px; }
.palmenu { width: 12px; height: 10px; }
.palmenu svg { width: 8px; height: 8px; }
.palscroll { margin-right: 12px; flex: none; }
.palscroll .thumb { flex-grow: 285; margin-left: 1px; }
.palscroll .b { flex-grow: 1113; }

.status { display: flex; align-items: center; height: 27px; flex: none; font-size: 11px; line-height: 13px; white-space: nowrap; }
.style { display: grid; grid-template-columns: 74px 49px; margin: 0; padding-left: 2px; }
.style dd { margin: 0; }
.status label { padding-right: 3px; }
.status .spin { height: 22px; }
.status .small { width: 38px; }
.vline { width: 2px; height: 25px; margin-left: 2px; border-left: 1px solid #aaa; background: #fff; }
.status button { width: 16px; height: 16px; margin-left: 2px; }
.status button svg { width: 14px; height: 14px; }
.status .slock svg { width: 12px; height: 14px; }
.layer { width: 85px; height: 25px; margin-left: 1px; }
.layer select { font-weight: bold; }
.layer::after { top: 10px; }
.msg { flex: 1; min-width: 0; margin: 0; padding-left: 6px; overflow: hidden; font-size: 13px; line-height: 18px; }
.coords { display: grid; grid-template-columns: 14px 49px; padding-left: 3px; margin-right: 9px; border-left: 1px solid #aaa; }
.coords b { font: 11px/13px "DejaVu Sans Mono", monospace; text-align: right; }
.status .zoom { width: 57px; background: #fff; padding: 0 2px 0 12px; }
.status .zoom svg { fill: #111; }
.resize { width: 16px; height: 18px; margin: 8px 0 0 3px; }
```
FILE: app.js
```js
// Swatch groups, dark to light
var colors = ("000000 1a1a1a 333333 4d4d4d 666666 808080 999999 b3b3b3 cccccc e6e6e6 ececec f2f2f2 f9f9f9 ffffff " +
  "800000 ff0000 808000 ffff00 008000 00ff00 008080 00ffff 000080 0000ff 800080 ff00ff " +
  "2b0000 550000 800000 aa0000 d40000 ff0000 ff2a2a ff5555 ff8080 ffaaaa ffd5d5 " +
  "280b0b 501616 782121 a02c2c c83737 d35f5f de8787 e9afaf f4d7d7 " +
  "241c1c 483737 6c5353 916f6f ac9393 c8b7b7 e3dbdb " +
  "2b1100 552200 803300 aa4400 d45500 ff6600 ff7f2a ff9955 ffb380 ffccaa ffe6d5 " +
  "28170b 502d16 784421 a05a2c c87137 d38d5f deaa87 e9c6af f4e3d7 " +
  "241f1c 483e37 6c5d53 917c6f ac9d93 c8beb7 e3dedb " +
  "2b2200 554400 806600 aa8800 d4aa00 ffcc00 ffd42a ffdd55").split(" ");
var box = document.getElementById("swatches");
colors.forEach(function (c) {
  var b = document.createElement("button");
  b.style.background = "#" + c;
  b.setAttribute("aria-label", "#" + c);
  box.appendChild(b);
});

// Rulers: one label every 250 units, ten divisions between labels
var STEP = 123.7;
function rect(x, y, w, h) {
  return '<rect x="' + x + '" y="' + y + '" width="' + w + '" height="' + h + '"/>';
}
function drawHorizontal(svg, origin) {
  var out = "", width = svg.clientWidth;
  for (var n = -60; n <= 120; n++) {
    var x = Math.round(origin + n * STEP / 10);
    if (x < 0 || x > width) continue;
    var major = n % 10 === 0, h = major ? 15 : n % 2 === 0 ? 6 : 3;
    out += rect(x, 18 - h, 1, h);
    if (major) out += '<text x="' + (x + 2) + '" y="8">' + n * 25 + "</text>";
  }
  out += '<path d="M381 11h9l-4.500 5z"/>';
  svg.innerHTML = out;
}
function drawVertical(svg, origin) {
  var out = "", height = svg.clientHeight;
  for (var n = -20; n <= 60; n++) {
    var y = Math.round(origin - n * STEP / 10);
    if (y < 0 || y > height) continue;
    var major = n % 10 === 0, w = major ? 13 : n % 2 === 0 ? 5 : 2;
    out += rect(17 - w, y, w, 1);
    if (major) String(n * 25).split("").forEach(function (d, i) {
      out += '<text x="4" y="' + (y + 9 + i * 8) + '">' + d + "</text>";
    });
  }
  out += '<path d="M11 314v9l5-4.500z"/>';
  svg.innerHTML = out;
}
function draw() {
  drawHorizontal(document.getElementById("hruler"), 526);
  drawVertical(document.getElementById("vruler"), 621);
}
draw();
window.addEventListener("resize", draw);
```
